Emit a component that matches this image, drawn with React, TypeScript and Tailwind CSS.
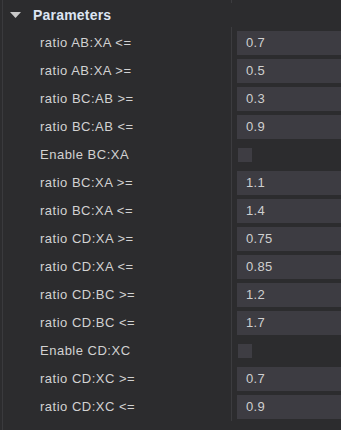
import React from "react";

type Row = { label: string; value?: string; checkbox?: boolean };

const rows: Row[] = [
  { label: "ratio AB:XA <=", value: "0.7" },
  { label: "ratio AB:XA >=", value: "0.5" },
  { label: "ratio BC:AB >=", value: "0.3" },
  { label: "ratio BC:AB <=", value: "0.9" },
  { label: "Enable BC:XA", checkbox: true },
  { label: "ratio BC:XA >=", value: "1.1" },
  { label: "ratio BC:XA <=", value: "1.4" },
  { label: "ratio CD:XA >=", value: "0.75" },
  { label: "ratio CD:XA <=", value: "0.85" },
  { label: "ratio CD:BC >=", value: "1.2" },
  { label: "ratio CD:BC <=", value: "1.7" },
  { label: "Enable CD:XC", checkbox: true },
  { label: "ratio CD:XC >=", value: "0.7" },
  { label: "ratio CD:XC <=", value: "0.9" },
];

export default function App() {
  return (
    <div
      className="w-[341px] h-[430px] bg-[#2c2c2e] overflow-hidden"
      style={{ fontFamily: '"Liberation Sans", Arial, sans-serif' }}
    >
      <div className="ml-[2px] h-full border-l border-[#3a3a3d]">
        <div className="flex h-[3px]">
          <div className="w-[228px]" />
          <div className="w-px bg-[#3c3c3f]" />
        </div>
        <div className="flex items-center h-[24px]">
          <svg width="11" height="6" viewBox="0 0 11 6" className="ml-[7px]">
            <polygon points="0,0 11,0 5.5,6" fill="#c9c9c9" />
          </svg>
          <span className="ml-[12px] text-[14px] font-bold text-[#dde5f3] tracking-[0.2px]">
            Parameters
          </span>
        </div>
        <div className="flex h-[2px]">
          <div className="w-[228px]" />
          <div className="w-px bg-[#3c3c3f]" />
        </div>
        {rows.map((r, i) => (
          <div key={i} className="flex h-[28px]">
            <div className="w-[228px] flex items-center pl-[37px] text-[13px] text-[#d2d2d2] tracking-[0.5px] whitespace-nowrap">
              {r.label}
            </div>
            <div className="w-px bg-[#3c3c3f]" />
            <div className="flex-1 flex items-center pl-[5px]">
              {r.checkbox ? (
                <div className="w-[14px] h-[14px] ml-px bg-[#3e3d43]" />
              ) : (
                <div className="w-full h-[24px] bg-[#3d3c42] flex items-center pl-[9px] text-[13px] text-[#cfcfcf] tracking-[0.3px]">
                  {r.value}
                </div>
              )}
            </div>
          </div>
        ))}
      </div>
    </div>
  );
}
